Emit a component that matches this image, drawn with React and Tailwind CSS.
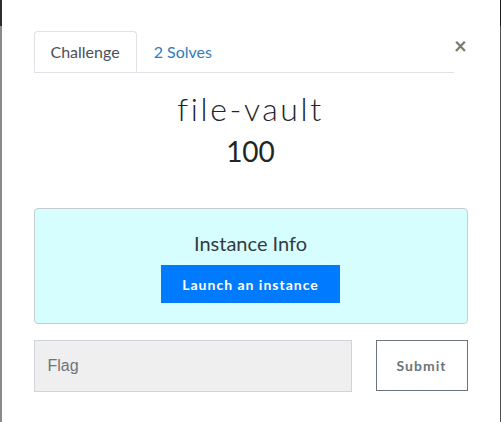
import { useState } from "react"

const App = () => {
  const [tab, setTab] = useState("challenge")
  const [flag, setFlag] = useState("")

  return (
    <div className="h-[422px] w-[501px] flex bg-white" style={{ fontFamily: "Lato, 'Open Sans', sans-serif" }}>
      {/* backdrop edges */}
      <div className="w-[2px] flex flex-col">
        <div className="h-[26px] bg-[#2e2e2e]" />
        <div className="flex-1 bg-[#8a8a8a]" />
      </div>

      <div className="flex-1 px-[32px] pt-[31px]">
        {/* Tabs */}
        <div className="flex items-start">
          <div className="flex flex-1 border-b border-[#dee2e6]">
            <button
              onClick={() => setTab("challenge")}
              className="h-[41px] px-[16px] -mb-px bg-white border border-[#dee2e6] border-b-white rounded-t-[4px] text-[16px] text-[#495057]"
            >
              Challenge
            </button>
            <button
              onClick={() => setTab("solves")}
              className="h-[41px] px-[17px] text-[16px] text-[#337ab7]"
            >
              2 Solves
            </button>
          </div>
          <button className="w-[14px] mt-[4px] text-[#777] text-[22px] leading-none font-bold">
            ×
          </button>
        </div>

        {/* Title */}
        <div className="text-center">
          <h3 className="mt-[16px] text-[32px] leading-[40px] font-light tracking-[2.6px] text-[#212529]">file-vault</h3>
          <h4 className="mt-[4px] text-[28px] leading-[36px] text-[#212529]">100</h4>
        </div>

        {/* Instance box */}
        <div className="mt-[39px] h-[116px] bg-[#d7fefe] border border-[#c6ccd0] rounded-[4px] flex flex-col items-center pt-[21px]">
          <div className="text-[20px] leading-[26px] text-[#343a40]">Instance Info</div>
          <button className="mt-[9px] w-[179px] h-[38px] bg-[#007bff] text-white text-[14px] font-bold tracking-[1px]">
            Launch an instance
          </button>
        </div>

        {/* Flag */}
        <div className="mt-[16px] flex gap-[24px]">
          <input
            value={flag}
            onChange={(e) => setFlag(e.target.value)}
            placeholder="Flag"
            className="w-[318px] h-[52px] bg-[#efefef] border border-[#ced4da] px-[13px] text-[16px] placeholder:text-[#6c757d] outline-none"
            style={{ fontFamily: "'Liberation Sans', Arial, sans-serif" }}
          />
          <button className="w-[92px] h-[51px] border border-[#6c757d] text-[#6c757d] text-[14px] font-bold tracking-[1px]">
            Submit
          </button>
        </div>
      </div>

      <div className="w-[2px] flex flex-col">
        <div className="h-[26px] bg-[#1e1e1e]" />
        <div className="flex-1 bg-[#4f4f4f]" />
      </div>
    </div>
  )
}

export default App
